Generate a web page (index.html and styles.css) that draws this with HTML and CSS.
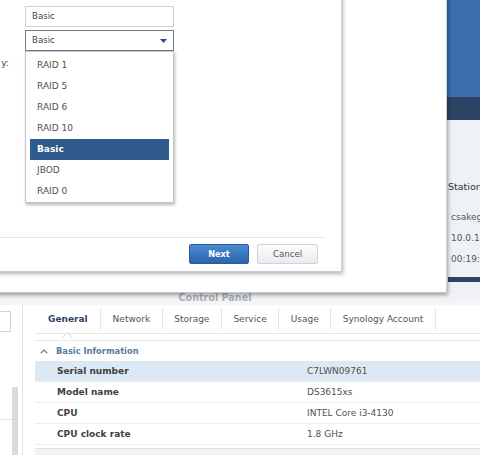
FILE: index.html
```html
<!DOCTYPE html>
<html>
<head>
<meta charset="utf-8">
<link rel="stylesheet" href="styles.css">
</head>
<body>
<div class="desk">

  <section class="cp">
    <div class="cp-title">Control Panel</div>
    <div class="cp-body">
      <div class="cp-side">
        <div class="side-list">
          <div class="search"></div>
          <div class="side-item"></div>
        </div>
        <div class="side-scroll"><div class="thumb"></div></div>
      </div>
      <div class="cp-main">
        <nav class="tabs">
          <span class="tab active">General<svg class="notch" width="9" height="5" viewBox="0 0 9 5"><polygon points="0,5 4.5,0.5 9,5" fill="#fff"/><polyline points="0,5 4.5,0.5 9,5" fill="none" stroke="#d4d8dc" stroke-width="1"/></svg></span>
          <span class="tab">Network</span>
          <span class="tab">Storage</span>
          <span class="tab">Service</span>
          <span class="tab">Usage</span>
          <span class="tab">Synology Account</span>
        </nav>
        <div class="section">
          <div class="sec-head">
            <svg class="caret" width="8" height="5" viewBox="0 0 8 5"><polyline points="0.7,4.3 4,1 7.3,4.3" fill="none" stroke="#6f8aa6" stroke-width="1.3"/></svg>
            <span>Basic Information</span>
          </div>
          <div class="row sel"><span class="k">Serial number</span><span class="v">C7LWN09761</span></div>
          <div class="row"><span class="k">Model name</span><span class="v">DS3615xs</span></div>
          <div class="row"><span class="k">CPU</span><span class="v">INTEL Core i3-4130</span></div>
          <div class="row"><span class="k">CPU clock rate</span><span class="v">1.8 GHz</span></div>
        </div>
        <div class="cp-foot"></div>
      </div>
    </div>
  </section>

  <section class="back-win">
    <div class="bw-head"></div>
    <div class="bw-band"></div>
    <div class="bw-body">
      <div class="bw-title">Station</div>
      <div class="bw-val">csakeg</div>
      <div class="bw-val">10.0.1.</div>
      <div class="bw-val">00:19:</div>
      <div class="bw-bar"></div>
    </div>
  </section>

  <section class="mid-win"></section>

  <section class="dialog">
    <div class="form">
      <span class="lbl"></span>
      <div class="field">Basic</div>
      <span class="lbl"></span>
      <div class="field combo"><span>Basic</span><svg width="7" height="4" viewBox="0 0 7 4"><polygon points="0,0 7,0 3.5,4" fill="#2b4e79"/></svg></div>
      <span class="lbl row3">y:</span>
      <div class="row3"></div>
    </div>
    <div class="foot">
      <button class="btn primary">Next</button>
      <button class="btn">Cancel</button>
    </div>
    <ul class="dropdown">
      <li>RAID 1</li>
      <li>RAID 5</li>
      <li>RAID 6</li>
      <li>RAID 10</li>
      <li class="on">Basic</li>
      <li>JBOD</li>
      <li>RAID 0</li>
    </ul>
  </section>

</div>
</body>
</html>
```

FILE: styles.css
```css
* { box-sizing: border-box; }
html, body { margin: 0; padding: 0; }
body {
  width: 480px;
  height: 455px;
  overflow: hidden;
  background: #ffffff;
  font-family: "DejaVu Sans", Verdana, sans-serif;
  font-size: 9px;
  color: #444;
}
.desk { position: relative; width: 480px; height: 455px; overflow: hidden; }

/* ---------- Control Panel (bottom window) ---------- */
.cp {
  position: absolute;
  left: 0; top: 285px;
  width: 480px; height: 172px;
  background: #fff;
  display: flex;
  flex-direction: column;
}
.cp-title {
  height: 20px;
  padding: 7px 50px 0 0;
  text-align: center;
  font-weight: bold;
  font-size: 9.6px;
  line-height: 12px;
  color: #a9afb6;
  background: linear-gradient(#eceef0, #f4f5f6);
}
.cp-body { flex: 1; display: flex; }
.cp-side {
  width: 23px;
  border-right: 1px solid #dfe1e3;
  display: grid;
  grid-template-columns: 12px 6px;
}
.side-list { display: flex; flex-direction: column; }
.search {
  margin: 6px 0 0 -6px;
  width: 17px; height: 21px;
  border: 1px solid #cfd3d7;
  background: #fff;
}
.side-item { height: 88px; border-bottom: 1px solid #e6e6e6; }
.side-scroll { padding-top: 82px; }
.thumb { height: 100%; background: #d9dadb; }

.cp-main { flex: 1; padding-left: 12px; display: flex; flex-direction: column; }
.tabs {
  height: 29px;
  display: flex;
  align-items: center;
  border-bottom: 1px solid #e3e5e7;
}
.tab {
  position: relative;
  height: 22px;
  line-height: 22px;
  padding: 0 11.5px;
  border-right: 1px solid #e4e6e8;
  color: #555;
  white-space: nowrap;
}
.tab.active { padding-left: 13px; padding-right: 12.5px; font-weight: bold; color: #2d4463; }
.notch { position: absolute; left: 28px; bottom: -7px; }

.section { margin-top: 6px; border-top: 1px solid #e8e9ea; }
.sec-head {
  height: 20px;
  display: flex;
  align-items: center;
  gap: 8px;
  padding-left: 5px;
  font-weight: bold;
  font-size: 8.3px;
  color: #5c7b9b;
}
.row {
  height: 21px;
  display: grid;
  grid-template-columns: 272px 1fr;
  align-items: center;
  border-bottom: 1px solid #eceded;
}
.row.sel { background: #dde8f5; }
.k { padding-left: 22px; font-weight: bold; color: #3f3f3f; }
.v { color: #505050; }
.cp-foot { margin-top: 3px; flex: 1; border-top: 1px solid #dcdddf; background: #f2f3f4; }

/* ---------- Back window (right) ---------- */
.back-win {
  position: absolute;
  left: 447px; top: 0;
  width: 60px; height: 291px;
  background: #eef2f7;
  display: flex;
  flex-direction: column;
}
.bw-head { height: 97px; background: #3c6ead; }
.bw-band { height: 23px; background: #2c4464; }
.bw-body { flex: 1; padding-left: 1px; }
.bw-title { margin-top: 61px; line-height: 12px; font-size: 9.5px; color: #333; }
.bw-val { padding-left: 3px; line-height: 21px; color: #555; }
.bw-val:first-of-type { margin-top: 14px; }
.bw-title + .bw-val { margin-top: 14px; }
.bw-bar { margin-top: 7px; height: 5px; background: #2c4464; }

/* ---------- Middle window ---------- */
.mid-win {
  position: absolute;
  left: -10px; top: -10px;
  width: 457px; height: 303px;
  background: #fff;
  border-right: 1px solid #cfd1d3;
  border-bottom: 1px solid #c4c6c8;
  box-shadow: 1px 2px 4px rgba(0,0,0,0.35);
}

/* ---------- Dialog (front) ---------- */
.dialog {
  position: absolute;
  left: -10px; top: -10px;
  width: 352px; height: 282px;
  background: #fff;
  border-right: 1px solid #d0d2d4;
  border-bottom: 1px solid #c8cacc;
  box-shadow: 1px 2px 4px rgba(0,0,0,0.3);
  display: flex;
  flex-direction: column;
}
.form {
  flex: 1;
  padding-top: 16px;
  display: grid;
  grid-template-columns: 35px 149px;
  grid-template-rows: 21px 21px 18px;
  row-gap: 3px;
  align-content: start;
}
.lbl { text-align: right; padding-right: 16px; line-height: 18px; color: #444; }
.field {
  border: 1px solid #cdd2d7;
  padding-left: 6px;
  line-height: 19px;
  color: #444;
  font-size: 8.6px;
}
.combo {
  border-color: #6f7d8c;
  display: flex;
  align-items: center;
  justify-content: space-between;
  padding-right: 6px;
}
.foot {
  margin-right: 15px;
  border-top: 1px solid #e6e8ea;
  padding: 6px 8px 7px 0;
  display: flex;
  justify-content: flex-end;
  gap: 8px;
}
.btn {
  height: 20px;
  width: 61px;
  border: 1px solid #cdd3d9;
  border-radius: 2px;
  background: linear-gradient(#fbfcfd, #e8ecf0);
  font-family: "DejaVu Sans", Verdana, sans-serif;
  font-size: 8.6px;
  color: #555;
  padding: 0;
}
.btn.primary {
  width: 60px;
  border-color: #2a5c9b;
  background: linear-gradient(#4b8ad1, #2b64ab);
  color: #fff;
  font-weight: bold;
  font-size: 8.2px;
}
.dropdown {
  position: absolute;
  left: 35px; top: 61px;
  width: 149px; height: 152px;
  margin: 0;
  padding: 3px 4px 2px;
  list-style: none;
  background: #fff;
  border: 1px solid #c3c7cc;
  box-shadow: 1px 2px 3px rgba(0,0,0,0.28);
}
.dropdown li { height: 21px; line-height: 21px; padding-left: 7px; color: #505050; }
.dropdown li.on { background: #2e5a8c; color: #fff; font-weight: bold; }
```
